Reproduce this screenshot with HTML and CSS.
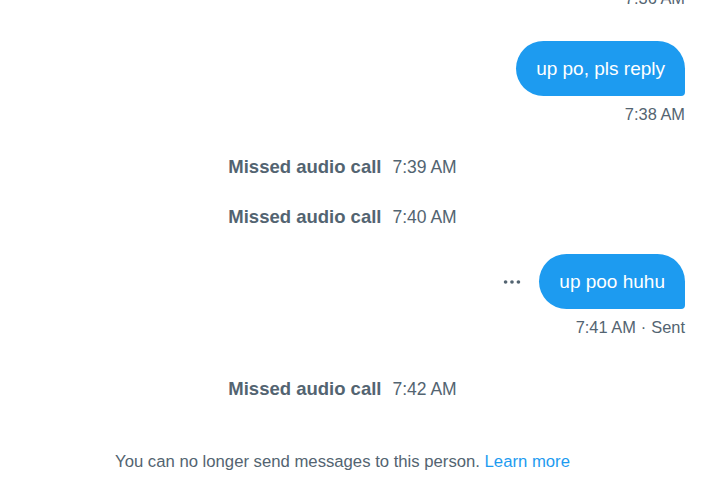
FILE: index.html
```html
<!DOCTYPE html>
<html>
<head>
<meta charset="utf-8">
<link rel="stylesheet" href="styles.css">
</head>
<body>
<div class="chat">
  <div class="meta meta-top">7:36 AM</div>

  <div class="msg-row">
    <div class="bubble">up po, pls reply</div>
  </div>
  <div class="meta">7:38 AM</div>

  <div class="call first-call"><span class="call-label">Missed audio call</span><span class="call-time">7:39 AM</span></div>
  <div class="call"><span class="call-label">Missed audio call</span><span class="call-time">7:40 AM</span></div>

  <div class="msg-row second">
    <button class="more" aria-label="More">
      <svg width="22" height="22" viewBox="0 0 24 24"><circle cx="5" cy="12" r="2"/><circle cx="12" cy="12" r="2"/><circle cx="19" cy="12" r="2"/></svg>
    </button>
    <div class="bubble">up poo huhu</div>
  </div>
  <div class="meta">7:41 AM<span class="dot">·</span>Sent</div>

  <div class="call last-call"><span class="call-label">Missed audio call</span><span class="call-time">7:42 AM</span></div>

  <div class="notice">You can no longer send messages to this person. <a href="#" class="link">Learn more</a></div>
</div>
</body>
</html>
```

FILE: styles.css
```css
html, body {
  margin: 0;
  padding: 0;
  background: #ffffff;
}
body {
  font-family: "Liberation Sans", Arial, sans-serif;
  color: #0f1419;
  overflow: hidden;
}
.chat {
  width: 705px;
  box-sizing: border-box;
  padding: 0 20px 0 0;
  display: flex;
  flex-direction: column;
}
.meta {
  align-self: flex-end;
  color: #536471;
  font-size: 16.4px;
  line-height: 20px;
  margin-top: 8px;
}
.meta-top {
  margin-top: -12px;
}
.msg-row {
  display: flex;
  justify-content: flex-end;
  align-items: center;
  margin-top: 33px;
}
.msg-row.second {
  margin-top: 25px;
}
.bubble {
  background: #1d9bf0;
  color: #ffffff;
  font-size: 19px;
  line-height: 25px;
  padding: 15px 20px;
  border-radius: 28px 28px 4px 28px;
}
.more {
  border: 0;
  background: transparent;
  padding: 0;
  margin-right: 16px;
  width: 22px;
  height: 22px;
  display: flex;
  align-items: center;
  justify-content: center;
  fill: #536471;
}
.call {
  display: flex;
  justify-content: center;
  align-items: baseline;
  gap: 11px;
  line-height: 24px;
  color: #536471;
  margin-top: 26px;
}
.first-call {
  margin-top: 31px;
}
.call-label {
  font-weight: bold;
  font-size: 18.5px;
}
.call-time {
  font-size: 17.5px;
}
.dot {
  margin: 0 5px;
}
.last-call {
  margin-top: 40px;
}
.notice {
  text-align: center;
  font-size: 16.7px;
  line-height: 22px;
  color: #536471;
  margin-top: 50px;
}
.link {
  color: #1d9bf0;
  text-decoration: none;
}
```
